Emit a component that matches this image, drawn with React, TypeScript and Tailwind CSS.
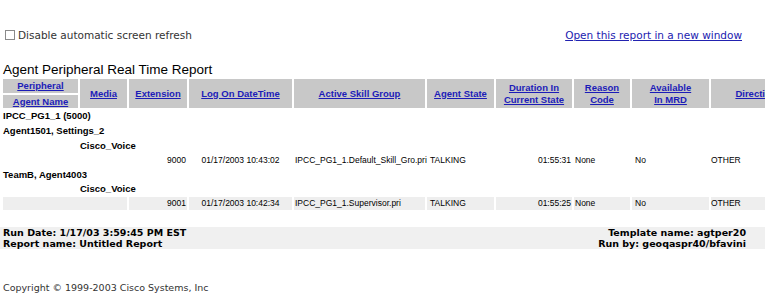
import React from "react";

const V = { fontFamily: '"DejaVu Sans", Verdana, sans-serif' };
const A = { fontFamily: '"Liberation Sans", Arial, sans-serif' };

const th = "bg-[#c8c8c8] text-center align-middle p-0 font-bold text-[9.5px] leading-[12px]";
const hl = "text-[#1c1cb8] underline";

function GroupRow({ text, indent, h }: { text: string; indent?: boolean; h?: string }) {
  return (
    <tr className={h ?? "h-[12px]"}>
      {indent ? <td colSpan={1} className="p-0" /> : null}
      <td colSpan={indent ? 9 : 10} className="p-0 font-bold text-[9.5px] leading-[12px] text-black whitespace-nowrap align-middle">
        {text}
      </td>
    </tr>
  );
}

function DataRow({ ext, date, skill, dur, gray }: { ext: string; date: string; skill: string; dur: string; gray?: boolean }) {
  const bg = gray ? "bg-[#eeeeee]" : "";
  const td = `p-0 text-[8.5px] leading-[13px] text-black whitespace-nowrap align-middle ${bg}`;
  return (
    <tr className="h-[13px]">
      <td colSpan={2} className={td} />
      <td className={`${td} text-right pr-[1px]`}>{ext}</td>
      <td className={`${td} text-center`}>{date}</td>
      <td className={`${td} pl-[1px] text-[8.1px]`}>{skill}</td>
      <td className={`${td} pl-[3px]`}>TALKING</td>
      <td className={`${td} text-right pr-[1px]`}>{dur}</td>
      <td className={`${td} pl-[1px]`}>None</td>
      <td className={`${td} pl-[3px]`}>No</td>
      <td className={`${td} pl-[0px]`}>OTHER</td>
    </tr>
  );
}

export default function App() {
  return (
    <div className="w-[765px] h-[299px] overflow-hidden bg-white">
      <div className="flex items-center justify-between pt-[29px] pl-[5px] pr-[23px] h-[41px]" style={V}>
        <label className="flex items-center gap-[3px] text-[10.5px] leading-[12px] text-[#333]">
          <span className="w-[10px] h-[10px] border border-[#8a8a8a] bg-white inline-block" />
          Disable automatic screen refresh
        </label>
        <a className="text-[10.5px] leading-[12px] underline text-[#2222b0]" href="#">
          Open this report in a new window
        </a>
      </div>
      <div className="mt-[22px] pl-[3px] text-[13.5px] leading-[14px] text-black" style={A}>
        Agent Peripheral Real Time Report
      </div>
      <table
        className="table-fixed border-separate border-spacing-[2px] w-[802px] ml-[1px]"
        style={A}
      >
        <colgroup>
          <col className="w-[75px]" />
          <col className="w-[47px]" />
          <col className="w-[58px]" />
          <col className="w-[103px]" />
          <col className="w-[131px]" />
          <col className="w-[67px]" />
          <col className="w-[76px]" />
          <col className="w-[56px]" />
          <col className="w-[77px]" />
          <col className="w-[90px]" />
        </colgroup>
        <tbody>
          <tr className="h-[14px]">
            <td className={th}><span className={hl}>Peripheral</span></td>
            <td rowSpan={2} className={th}><span className={hl}>Media</span></td>
            <td rowSpan={2} className={th}><span className={hl}>Extension</span></td>
            <td rowSpan={2} className={th}><span className={hl}>Log On DateTime</span></td>
            <td rowSpan={2} className={th}><span className={hl}>Active Skill Group</span></td>
            <td rowSpan={2} className={th}><span className={hl}>Agent State</span></td>
            <td rowSpan={2} className={th}>
              <span className={hl}>Duration In</span>
              <br />
              <span className={hl}>Current State</span>
            </td>
            <td rowSpan={2} className={th}>
              <span className={hl}>Reason</span>
              <br />
              <span className={hl}>Code</span>
            </td>
            <td rowSpan={2} className={th}>
              <span className={hl}>Available</span>
              <br />
              <span className={hl}>In MRD</span>
            </td>
            <td rowSpan={2} className={th}><span className={hl}>Direction</span></td>
          </tr>
          <tr className="h-[13px]">
            <td className={th}><span className={hl}>Agent Name</span></td>
          </tr>
          <GroupRow text="IPCC_PG1_1 (5000)" />
          <GroupRow text="Agent1501, Settings_2" h="h-[13px]" />
          <GroupRow text="Cisco_Voice" indent h="h-[13px]" />
          <DataRow ext="9000" date="01/17/2003 10:43:02" skill="IPCC_PG1_1.Default_Skill_Gro.pri" dur="01:55:31" />
          <GroupRow text="TeamB, Agent4003" />
          <GroupRow text="Cisco_Voice" indent />
          <DataRow ext="9001" date="01/17/2003 10:42:34" skill="IPCC_PG1_1.Supervisor.pri" dur="01:55:25" gray />
        </tbody>
      </table>
      <div
        className="mt-[15px] h-[22px] bg-[#f0f0f0] flex justify-between pl-[3px] pr-[19px] font-bold text-[9.5px] leading-[11px] text-black"
        style={V}
      >
        <div>
          <div>Run Date: 1/17/03 3:59:45 PM EST</div>
          <div>Report name: Untitled Report</div>
        </div>
        <div className="text-right">
          <div>Template name: agtper20</div>
          <div>Run by: geoqaspr40/bfavini</div>
        </div>
      </div>
      <div className="mt-[33px] pl-[3px] text-[9.5px] leading-[12px] text-[#333]" style={V}>
        Copyright © 1999-2003 Cisco Systems, Inc
      </div>
    </div>
  );
}
